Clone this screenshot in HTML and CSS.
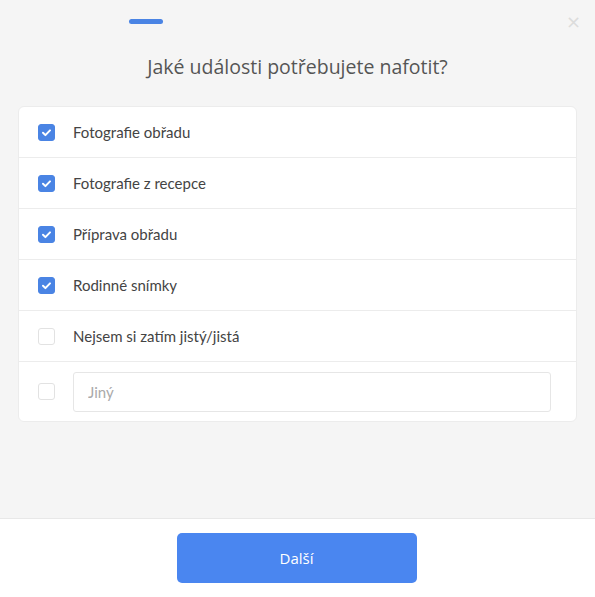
FILE: index.html
```html
<!DOCTYPE html>
<html>
<head>
    <title>Jaké události potřebujete nafotit?</title>
    <link rel="stylesheet" href="styles.css">
</head>
<body>
    <div class="modal">
        <div class="top">
            <div class="progress"></div>
            <div class="close">&times;</div>
        </div>
        <h1>Jaké události potřebujete nafotit?</h1>
        <div class="options">
            <label class="option">
                <span class="check checked"><svg viewBox="0 0 17 17"><path d="M5 8.8l2.4 2.3 4.6-4.7" /></svg></span>
                <span>Fotografie obřadu</span>
            </label>
            <label class="option">
                <span class="check checked"><svg viewBox="0 0 17 17"><path d="M5 8.8l2.4 2.3 4.6-4.7" /></svg></span>
                <span>Fotografie z recepce</span>
            </label>
            <label class="option">
                <span class="check checked"><svg viewBox="0 0 17 17"><path d="M5 8.8l2.4 2.3 4.6-4.7" /></svg></span>
                <span>Příprava obřadu</span>
            </label>
            <label class="option">
                <span class="check checked"><svg viewBox="0 0 17 17"><path d="M5 8.8l2.4 2.3 4.6-4.7" /></svg></span>
                <span>Rodinné snímky</span>
            </label>
            <label class="option">
                <span class="check"></span>
                <span>Nejsem si zatím jistý/jistá</span>
            </label>
            <div class="option other">
                <span class="check"></span>
                <input type="text" placeholder="Jiný">
            </div>
        </div>
        <div class="footer">
            <button type="button">Další</button>
        </div>
    </div>
</body>
</html>
```

FILE: styles.css
```css
body {
    margin: 0;
    background-color: #f5f5f5;
    font-family: Lato, Arial, sans-serif;
}
.modal {
    height: 597px;
    display: flex;
    flex-direction: column;
}
.top {
    height: 42px;
    display: flex;
    justify-content: space-between;
    align-items: flex-start;
}
.progress {
    width: 34px;
    height: 5px;
    margin: 19px 0 0 129px;
    background-color: #4a84e4;
    border-radius: 3px;
}
.close {
    margin: 7px 14px 0 0;
    font-family: "DejaVu Sans", sans-serif;
    font-size: 18px;
    line-height: 30px;
    color: #dcdcdc;
}
h1 {
    margin: 13px 0 27px;
    text-align: center;
    font-family: "Open Sans", sans-serif;
    font-weight: 500;
    font-size: 19.5px;
    line-height: 24px;
    color: #555;
}
.options {
    margin: 0 18px;
    background-color: #fff;
    border: 1px solid #ececec;
    border-radius: 6px;
}
.option {
    height: 50px;
    display: flex;
    align-items: center;
    padding-left: 19px;
    border-bottom: 1px solid #ececec;
    font-size: 15px;
    color: #444;
}
.option.other {
    height: 59px;
    border-bottom: none;
}
.check {
    width: 17px;
    height: 17px;
    box-sizing: border-box;
    margin-right: 18px;
    border: 1px solid #e2e2e2;
    border-radius: 3px;
    background-color: #fff;
    flex-shrink: 0;
}
.check.checked {
    background-color: #4a84e4;
    border-color: #4a84e4;
}
.check svg {
    display: block;
    width: 17px;
    height: 17px;
    margin: -1px;
    fill: none;
    stroke: #fff;
    stroke-width: 2;
    stroke-linecap: round;
    stroke-linejoin: round;
}
.other input {
    width: 478px;
    height: 40px;
    box-sizing: border-box;
    padding: 0 14px;
    border: 1px solid #e6e6e6;
    border-radius: 3px;
    font-family: Lato, Arial, sans-serif;
    font-size: 15px;
    color: #444;
    outline: none;
}
.other input::placeholder {
    color: #aaa;
}
.footer {
    margin-top: auto;
    height: 78px;
    background-color: #fff;
    border-top: 1px solid #e8e8e8;
    display: flex;
    justify-content: center;
    align-items: center;
}
button {
    width: 240px;
    height: 50px;
    margin-right: 2px;
    border: none;
    border-radius: 5px;
    background-color: #4a86f0;
    color: #fff;
    font-family: "Open Sans", sans-serif;
    font-size: 15px;
}
```
